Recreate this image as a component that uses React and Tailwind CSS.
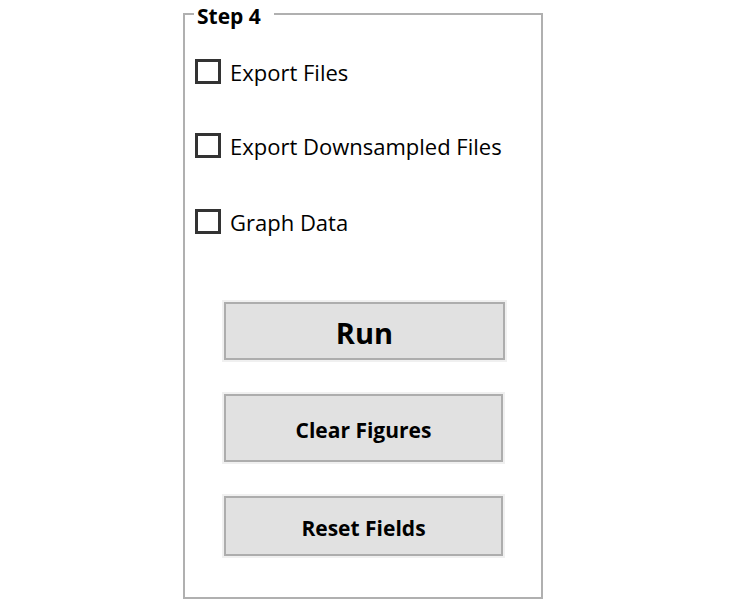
import React from "react";

function Check({ label }) {
  return (
    <div className="flex h-[25px] items-center">
      <div className="h-[25px] w-[26px] shrink-0 border-[3px] border-[#333333] bg-white" />
      <span className="ml-[9px] pt-[1px] text-[22px] leading-[25px] text-black whitespace-nowrap">{label}</span>
    </div>
  );
}

function Btn({ label, w, h, size }) {
  return (
    <div className={`flex items-center justify-center border-2 border-[#f0f0f0] ${w} ${h}`}>
      <div className="flex h-full w-full items-center justify-center border-2 border-[#adadad] bg-[#e1e1e1] pt-[4px]">
        <span className={`font-bold text-black whitespace-nowrap ${size}`}>{label}</span>
      </div>
    </div>
  );
}

export default function App() {
  return (
    <div
      className="relative h-[605px] w-[740px] overflow-hidden bg-white"
      style={{ fontFamily: '"Open Sans", "Noto Sans", sans-serif' }}
    >
      <div className="pl-[183px] pt-[1px]">
        <fieldset className="h-[598px] w-[360px] border-2 border-[#b0b0b0]">
          <legend className="ml-[9px] pl-[3px] pr-[13px] pt-[5px] text-[21px] font-bold leading-[20px] text-black">
            Step 4
          </legend>
          <div className="flex flex-col pl-[10px]">
            <div className="mt-[33px]">
              <Check label="Export Files" />
            </div>
            <div className="mt-[49px]">
              <Check label="Export Downsampled Files" />
            </div>
            <div className="mt-[51px]">
              <Check label="Graph Data" />
            </div>
            <div className="ml-[27px] mt-[66px] flex flex-col gap-[30px]">
              <Btn label="Run" w="w-[285px]" h="h-[62px]" size="text-[29px] leading-[34px]" />
              <Btn label="Clear Figures" w="w-[283px]" h="h-[72px]" size="text-[21px] leading-[26px]" />
              <Btn label="Reset Fields" w="w-[283px]" h="h-[64px]" size="text-[21px] leading-[26px]" />
            </div>
          </div>
        </fieldset>
      </div>
    </div>
  );
}
